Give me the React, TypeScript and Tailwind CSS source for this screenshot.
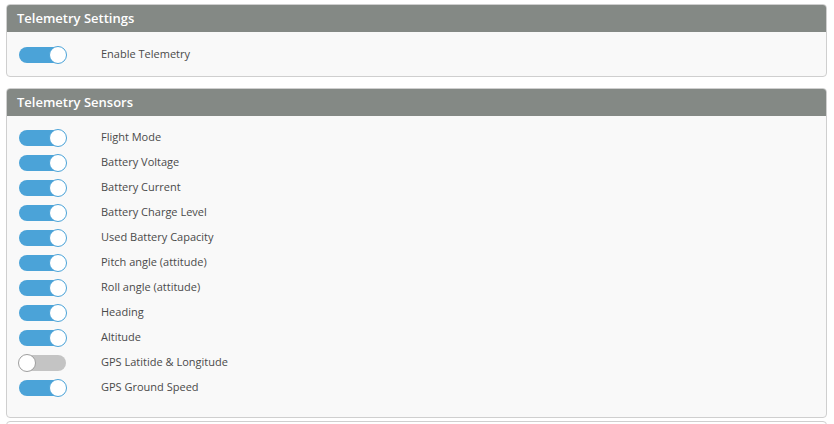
import React, { useState } from "react";

type Sensor = { key: string; label: string; on: boolean };

const initialSensors: Sensor[] = [
  { key: "mode", label: "Flight Mode", on: true },
  { key: "vbat", label: "Battery Voltage", on: true },
  { key: "curr", label: "Battery Current", on: true },
  { key: "fuel", label: "Battery Charge Level", on: true },
  { key: "used", label: "Used Battery Capacity", on: true },
  { key: "pitch", label: "Pitch angle (attitude)", on: true },
  { key: "roll", label: "Roll angle (attitude)", on: true },
  { key: "heading", label: "Heading", on: true },
  { key: "alt", label: "Altitude", on: true },
  { key: "gps", label: "GPS Latitide & Longitude", on: false },
  { key: "speed", label: "GPS Ground Speed", on: true },
];

function Toggle({ on, onChange }: { on: boolean; onChange: () => void }) {
  return (
    <button
      type="button"
      onClick={onChange}
      className={`relative h-[16px] w-[47px] shrink-0 rounded-full ${on ? "bg-[#4ba3d8]" : "bg-[#c4c4c4]"}`}
    >
      <span
        className={`absolute top-[-1px] h-[18px] w-[18px] rounded-full bg-white border ${
          on ? "right-[-1px] border-[#4ba3d8]" : "left-[-1px] border-[#9e9e9e]"
        }`}
      />
    </button>
  );
}

function Row({ label, on, onChange }: { label: string; on: boolean; onChange: () => void }) {
  return (
    <div className="flex items-center h-[25px]">
      <div className="w-[82px] flex items-center">
        <Toggle on={on} onChange={onChange} />
      </div>
      <span className="text-[11px] text-[#4a4a4a]">{label}</span>
    </div>
  );
}

function Panel({ title, children, className }: { title: string; children: React.ReactNode; className?: string }) {
  return (
    <div className={`border border-[#cfcfcf] rounded-[4px] bg-[#f9f9f9] overflow-hidden ${className ?? ""}`}>
      <div className="h-[27px] bg-[#848985] flex items-center px-[10px]">
        <span className="text-white font-semibold text-[13px] leading-none">{title}</span>
      </div>
      {children}
    </div>
  );
}

export default function App() {
  const [enabled, setEnabled] = useState(true);
  const [sensors, setSensors] = useState(initialSensors);

  const toggleSensor = (key: string) => {
    setSensors((prev) => prev.map((s) => (s.key === key ? { ...s, on: !s.on } : s)));
  };

  return (
    <div
      className="bg-white min-h-screen pt-[4px] pl-[6px] pr-[7px]"
      style={{ fontFamily: '"Open Sans", "Liberation Sans", sans-serif' }}
    >
      {/* Ajustes */}
      <Panel title="Telemetry Settings">
        <div className="pl-[12px] pt-[10px] pb-[9px]">
          <Row label="Enable Telemetry" on={enabled} onChange={() => setEnabled(!enabled)} />
        </div>
      </Panel>

      {/* Sensores */}
      <Panel title="Telemetry Sensors" className="mt-[11px]">
        <div className="pl-[12px] pt-[9px] pb-[17px]">
          {sensors.map((s) => (
            <Row key={s.key} label={s.label} on={s.on} onChange={() => toggleSensor(s.key)} />
          ))}
        </div>
      </Panel>

      <div className="mt-[3px] border border-[#cfcfcf] rounded-[4px] h-[20px]" />
    </div>
  );
}
